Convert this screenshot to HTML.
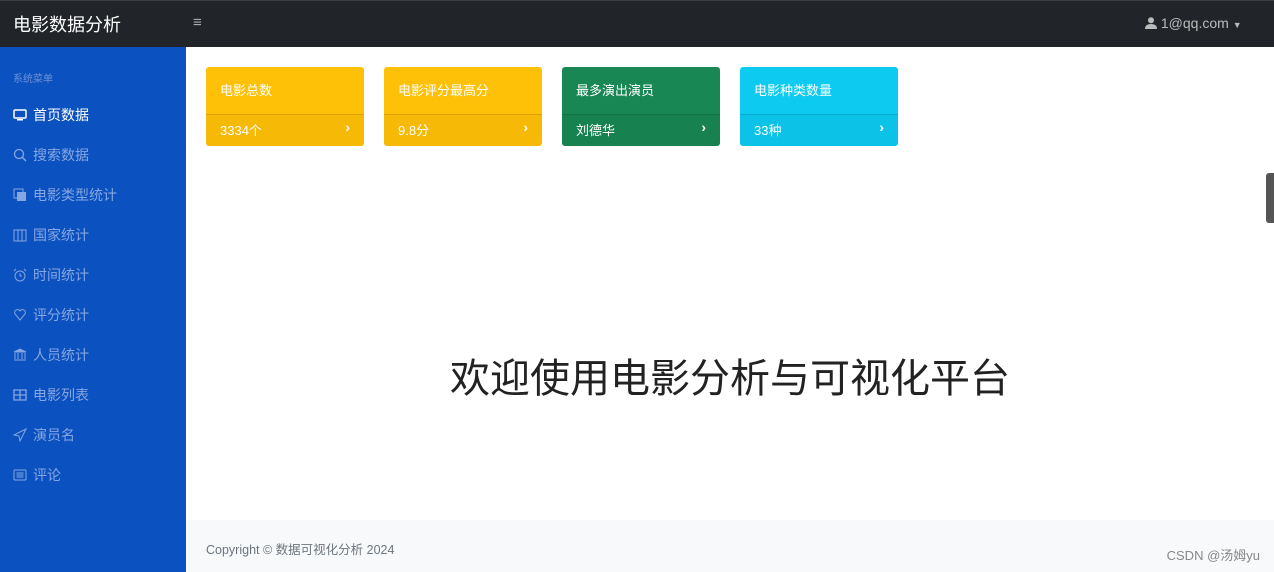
<!DOCTYPE html>
<html><head><meta charset="utf-8"><style>
*{margin:0;padding:0;box-sizing:border-box}
body{width:1274px;height:572px;overflow:hidden;font-family:"Liberation Sans","Noto Sans CJK SC",sans-serif;background:#fff;position:relative}
.top{position:absolute;left:0;top:0;width:1274px;height:47px;background:#212529;border-top:1px solid #3a3f44}
.brand{position:absolute;left:13px;top:10px;color:#fff;font-size:18px}
.burger{position:absolute;left:193px;top:13px;color:#aaa;font-size:15px}
.user{position:absolute;left:1145px;top:14px;color:#bbb;font-size:14px}
.side{position:absolute;left:0;top:47px;width:186px;height:525px;background:#0b52c0}
.sh{position:absolute;left:13px;top:23px;font-size:10px;color:#6f92d6}
.mi{position:absolute;left:13px;font-size:14px;color:#86a6e2;display:flex;align-items:center}
.mi .ic{width:14px;height:14px;margin-right:6px;display:inline-block}
.card{position:absolute;top:67px;width:158px;height:79px;border-radius:3px;color:#fff;font-size:13px;overflow:hidden}
.card .t{height:47px;padding:13px 14px}
.card .b{height:32px;padding:5px 14px;border-top:1px solid rgba(0,0,0,.12);position:relative;background:rgba(0,0,0,.04)}
.card .b span{position:absolute;right:14px;top:4px;font-weight:bold;font-size:14px}
.h1{position:absolute;left:186px;width:1088px;top:346px;text-align:center;font-size:40px;color:#222}
.foot{position:absolute;left:186px;top:520px;width:1088px;height:52px;background:#f8f9fa;color:#6c757d;font-size:12.5px;padding:19px 20px}
.csdn{position:absolute;right:14px;top:545px;color:#888;font-size:13px}
</style></head><body>
<div class="top"><div class="brand">电影数据分析</div><div class="burger">≡</div>
<div class="user"><svg width="12" height="12" viewBox="0 0 12 12" style="vertical-align:-1px"><circle cx="6" cy="3.2" r="3" fill="#bbb"/><path d="M0 12 Q0 7 6 7 Q12 7 12 12Z" fill="#bbb"/></svg> 1@qq.com <span style="font-size:9px">▼</span></div></div>
<div class="side"><div class="sh">系统菜单</div>
<div class="mi" style="top:58px;color:#fff"><svg class="ic" viewBox="0 0 14 14"><rect x="1" y="2" width="12" height="8" rx="1" fill="none" stroke="#fff" stroke-width="1.5"/><rect x="4" y="11" width="6" height="1.5" fill="#fff"/></svg>首页数据</div>
<div class="mi" style="top:98px"><svg class="ic" viewBox="0 0 14 14"><circle cx="6" cy="6" r="4.5" fill="none" stroke="#86a6e2" stroke-width="1.3"/><path d="M9.5 9.5L13 13" stroke="#86a6e2" stroke-width="1.5"/></svg>搜索数据</div>
<div class="mi" style="top:138px"><svg class="ic" viewBox="0 0 14 14"><rect x="1" y="1" width="9" height="9" fill="none" stroke="#86a6e2"/><rect x="4" y="4" width="9" height="9" fill="#86a6e2"/></svg>电影类型统计</div>
<div class="mi" style="top:178px"><svg class="ic" viewBox="0 0 14 14"><path d="M1 2h12v11H1zM5 2v11M9 2v11" fill="none" stroke="#86a6e2"/></svg>国家统计</div>
<div class="mi" style="top:218px"><svg class="ic" viewBox="0 0 14 14"><circle cx="7" cy="8" r="5" fill="none" stroke="#86a6e2"/><path d="M7 5v3h2M1 3l2-2M13 3l-2-2" stroke="#86a6e2" fill="none"/></svg>时间统计</div>
<div class="mi" style="top:258px"><svg class="ic" viewBox="0 0 14 14"><path d="M7 12L2 6a2.8 2.8 0 015-3 2.8 2.8 0 015 3z" fill="none" stroke="#86a6e2"/></svg>评分统计</div>
<div class="mi" style="top:298px"><svg class="ic" viewBox="0 0 14 14"><path d="M1 4L7 1l6 3zM2 5v6M5 5v6M9 5v6M12 5v6M1 12h12" stroke="#86a6e2" fill="#86a6e2"/></svg>人员统计</div>
<div class="mi" style="top:338px"><svg class="ic" viewBox="0 0 14 14"><path d="M1 2h12v10H1zM1 7h12M7 2v10" fill="none" stroke="#86a6e2" stroke-width="1.3"/></svg>电影列表</div>
<div class="mi" style="top:378px"><svg class="ic" viewBox="0 0 14 14"><path d="M13 1L1 7l5 1 1 5z" fill="none" stroke="#86a6e2"/></svg>演员名</div>
<div class="mi" style="top:418px"><svg class="ic" viewBox="0 0 14 14"><rect x="1" y="2" width="12" height="10" rx="1" fill="none" stroke="#86a6e2"/><path d="M3.5 5h7M3.5 7h7M3.5 9h7" stroke="#86a6e2"/></svg>评论</div>
</div>
<div class="card" style="left:206px;background:#ffc107"><div class="t">电影总数</div><div class="b">3334个<span>›</span></div></div>
<div class="card" style="left:384px;background:#ffc107"><div class="t">电影评分最高分</div><div class="b">9.8分<span>›</span></div></div>
<div class="card" style="left:562px;background:#198754"><div class="t">最多演出演员</div><div class="b">刘德华<span>›</span></div></div>
<div class="card" style="left:740px;background:#0dcaf0"><div class="t">电影种类数量</div><div class="b">33种<span>›</span></div></div>
<div class="h1">欢迎使用电影分析与可视化平台</div>
<div style="position:absolute;left:1266px;top:173px;width:8px;height:50px;background:#555;border-radius:3px 0 0 3px"></div>
<div class="foot">Copyright © 数据可视化分析 2024</div>
<div class="csdn">CSDN @汤姆yu</div>
</body></html>
